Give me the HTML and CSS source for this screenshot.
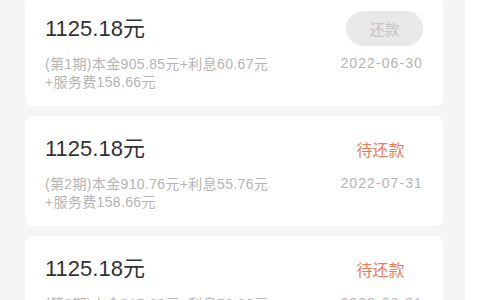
FILE: index.html
```html
<!DOCTYPE html>
<html>
<head>
	<meta charset="utf-8">
	<title>还款计划</title>
	<link rel="stylesheet" href="styles.css">
</head>
<body>
	<div class="page">
		<div class="plan-list">
			<div class="plan-card">
				<div class="plan-top">
					<span class="amount">1125.18元</span>
					<button class="repay-btn">还款</button>
				</div>
				<div class="plan-bottom">
					<p class="detail"><span>(第1期)本金905.85元+利息60.67元</span><span>+服务费158.66元</span></p>
					<span class="date">2022-06-30</span>
				</div>
			</div>

			<div class="plan-card">
				<div class="plan-top">
					<span class="amount">1125.18元</span>
					<span class="status">待还款</span>
				</div>
				<div class="plan-bottom">
					<p class="detail"><span>(第2期)本金910.76元+利息55.76元</span><span>+服务费158.66元</span></p>
					<span class="date">2022-07-31</span>
				</div>
			</div>

			<div class="plan-card">
				<div class="plan-top">
					<span class="amount">1125.18元</span>
					<span class="status">待还款</span>
				</div>
				<div class="plan-bottom">
					<p class="detail"><span>(第3期)本金915.69元+利息50.83元</span><span>+服务费158.66元</span></p>
					<span class="date">2022-08-31</span>
				</div>
			</div>
		</div>
	</div>
</body>
</html>
```

FILE: styles.css
```css
body {
	margin: 0;
	padding: 0;
	background-color: #fff;
	font-family: "Liberation Sans", "Noto Sans CJK SC", sans-serif;
	overflow: hidden;
}

.page {
	width: 418px;
	height: 300px;
	padding: 0 22px 0 25px;
	background-color: #f5f5f5;
	overflow: hidden;
}

.plan-list {
	display: flex;
	flex-direction: column;
	gap: 10px;
	margin-top: -4px;
}

.plan-card {
	background-color: #fff;
	border-radius: 8px;
	padding: 15px 20px;
	height: 80px;
}

.plan-top {
	display: flex;
	justify-content: space-between;
	align-items: center;
	height: 35px;
}

.amount {
	font-size: 22px;
	color: #333;
	line-height: 35px;
}

.repay-btn {
	width: 77px;
	height: 35px;
	border: none;
	border-radius: 18px;
	background-color: #e9e9e9;
	color: #c4c4c4;
	font-family: "Noto Sans CJK SC", sans-serif;
	font-size: 15px;
	padding: 0;
}

.status {
	width: 77px;
	text-align: center;
	font-family: "Noto Sans CJK SC", sans-serif;
	font-size: 16px;
	color: #ee7b55;
	padding-right: 4px;
}

.plan-bottom {
	display: flex;
	justify-content: space-between;
	align-items: flex-start;
	margin-top: 9px;
}

.detail {
	margin: 0;
	font-size: 14px;
	letter-spacing: 0.35px;
	color: #b5b5b5;
}

.detail span {
	display: block;
	height: 18px;
	line-height: 18px;
}

.date {
	font-size: 14px;
	line-height: 16px;
	letter-spacing: 1.1px;
	color: #b5b5b5;
}
```
